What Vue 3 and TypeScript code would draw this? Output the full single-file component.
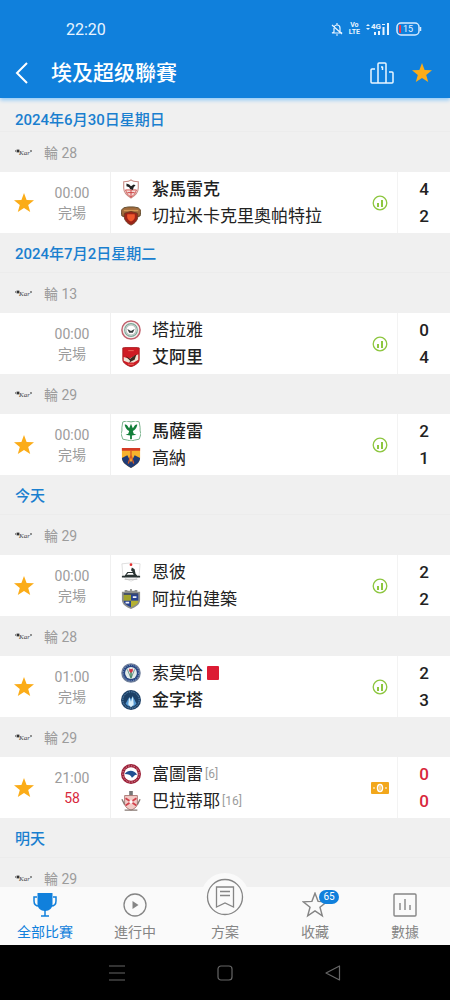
<script setup lang="ts">
import { computed, ref } from 'vue'

interface Team {
  name: string
  crest: string
  score: number
  winner?: boolean
  redCard?: boolean
  rank?: number
}
interface Match {
  time: string
  status: string
  live?: boolean
  starred: boolean
  teams: Team[]
}
interface Fixture {
  id: number
  round: number
  match?: Match
}
interface Day {
  label: string
  pinned?: boolean
  fixtures: Fixture[]
}

const days = ref<Day[]>([
  {
    label: '2024年6月30日星期日',
    pinned: true,
    fixtures: [
      {
        id: 1, round: 28,
        match: {
          time: '00:00', status: '完場', starred: true,
          teams: [
            { name: '紮馬雷克', crest: 'zamalek', score: 4, winner: true },
            { name: '切拉米卡克里奧帕特拉', crest: 'ceramica', score: 2 },
          ],
        },
      },
    ],
  },
  {
    label: '2024年7月2日星期二',
    fixtures: [
      {
        id: 2, round: 13,
        match: {
          time: '00:00', status: '完場', starred: false,
          teams: [
            { name: '塔拉雅', crest: 'tala', score: 0 },
            { name: '艾阿里', crest: 'ahly', score: 4, winner: true },
          ],
        },
      },
      {
        id: 3, round: 29,
        match: {
          time: '00:00', status: '完場', starred: true,
          teams: [
            { name: '馬薩雷', crest: 'masry', score: 2, winner: true },
            { name: '高納', crest: 'gouna', score: 1 },
          ],
        },
      },
    ],
  },
  {
    label: '今天',
    fixtures: [
      {
        id: 4, round: 29,
        match: {
          time: '00:00', status: '完場', starred: true,
          teams: [
            { name: '恩彼', crest: 'enppi', score: 2 },
            { name: '阿拉伯建築', crest: 'mokawloon', score: 2 },
          ],
        },
      },
      {
        id: 5, round: 28,
        match: {
          time: '01:00', status: '完場', starred: true,
          teams: [
            { name: '索莫哈', crest: 'smouha', score: 2, redCard: true },
            { name: '金字塔', crest: 'pyramids', score: 3, winner: true },
          ],
        },
      },
      {
        id: 6, round: 29,
        match: {
          time: '21:00', status: '58', live: true, starred: true,
          teams: [
            { name: '富圖雷', crest: 'future', score: 0, rank: 6 },
            { name: '巴拉蒂耶', crest: 'baladiyat', score: 0, rank: 16 },
          ],
        },
      },
    ],
  },
  {
    label: '明天',
    fixtures: [{ id: 7, round: 29 }],
  },
])

const leagueStarred = ref(true)
const activeTab = ref('all')
const favourites = ref(65)
const tabs = computed(() => [
  { id: 'all', label: '全部比賽' },
  { id: 'live', label: '進行中' },
  { id: 'plan', label: '方案' },
  { id: 'fav', label: '收藏', badge: favourites.value },
  { id: 'data', label: '數據' },
])

function toggle(match: Match) {
  match.starred = !match.starred
  favourites.value += match.starred ? 1 : -1
}
</script>

<template>
  <div class="app">
    <svg class="defs" aria-hidden="true">
      <symbol id="star" viewBox="0 0 22 22">
        <path d="M11 1l2.6 6.9 7.4.4-5.8 4.6 2 7.2L11 16l-6.2 4.1 2-7.2L1 8.3l7.4-.4z" />
      </symbol>
      <symbol id="zamalek" viewBox="0 0 22 22">
        <path d="M11 1c2 2 5 2 8 2v7c0 5-3 8-8 11-5-3-8-6-8-11V3c3 0 6 0 8-2z" fill="#fff" stroke="#c98b84" stroke-width="1.200" />
        <path d="M5 12h12c-1 4-3 6-6 8-3-2-5-4-6-8z" fill="#f4dcd9" stroke="#d04a48" />
        <path d="M11 12v8M7 15h8" stroke="#cc3b3b" />
        <path d="M6 5l3 1 2 2 3-2 2 1-2 2-1 3-3-1-1-2-3-1z" fill="#222" />
      </symbol>
      <symbol id="ceramica" viewBox="0 0 22 22">
        <path d="M0 5l3-3 5-1h6l5 1 3 3-1 6-4 1-6-2-6 2-4-1z" fill="#a06a3c" stroke="#5c482a" />
        <path d="M3 5h16" stroke="#d39a55" stroke-width="1.500" />
        <path d="M4 8l7-2 7 2c2 6-2 11-7 13C6 19 2 14 4 8z" fill="#9c2418" stroke="#6c3a20" />
        <path d="M7 9h8c1 4-1 7-4 8-3-1-5-4-4-8z" fill="#ef572c" />
      </symbol>
      <symbol id="tala" viewBox="0 0 22 22">
        <circle cx="11" cy="11" r="10" fill="#f4eded" stroke="#c0606c" stroke-width="1.600" />
        <circle cx="11" cy="11" r="7" fill="#fff" stroke="#79a796" stroke-width="1.200" />
        <circle cx="11" cy="11" r="5.500" fill="none" stroke="#777" stroke-width=".6" />
        <path d="M7 10l2 1 2 1 2-1 2-1-2 4H9z" fill="#343b3b" />
      </symbol>
      <symbol id="ahly" viewBox="0 0 22 22">
        <path d="M2 1c6-1 12-1 18 0v13c0 4-5 6-9 8-4-2-9-4-9-8z" fill="#cf1b24" stroke="#a51c20" />
        <path d="M3 11l6 2 10-5v6l-5 3H8l-5-2z" fill="#eee3d6" />
        <path d="M5 10l5 3 7-5-2 6-4 2-2 2 1-3z" fill="#39281d" />
        <path d="M8 4h6M8 19h6" stroke="#ee6d60" />
      </symbol>
      <symbol id="masry" viewBox="0 0 22 22">
        <path d="M2 1l4-1 5 1 5-1 4 1 1 6v4l1 3-2 6-5 1-4 1-4-1-5-1-2-6 1-3V7z" fill="#fff" stroke="#6cab80" stroke-width="1" />
        <path d="M4 4c3-1 3 2 5 4l2-5 2 5c2-2 2-5 5-4-1 4-3 6-5 7l1 3 3 1-5 1v4h-2v-4l-5-1 3-1 1-3C7 10 5 8 4 4z" fill="#137f3a" />
      </symbol>
      <symbol id="gouna" viewBox="0 0 22 22">
        <path d="M1 0h20v11c0 5-5 8-10 11C6 19 1 16 1 11z" fill="#f7b22d" />
        <path d="M1 0h20v3H1z" fill="#d43b25" />
        <path d="M1 11l6-3 4 8 4-8 6 3c0 5-5 8-10 11C6 19 1 16 1 11z" fill="#203b75" />
        <path d="M11 3v8M8 17l3-9 3 9" stroke="#d65a25" stroke-width="1.500" fill="none" />
      </symbol>
      <symbol id="enppi" viewBox="0 0 22 22">
        <path d="M1 2l10-1 10 1-1 12c-1 4-6 6-9 7-3-1-8-3-9-7z" fill="#fff" stroke="#ddd" />
        <circle cx="11" cy="3" r="1.500" fill="#e32e2d" />
        <path d="M1 15h3l3-4h6l-2-2 1-3 3 2 1 5 2 2h3v2H1z" fill="#293332" />
        <path d="M8 12h5l1 2H6z" fill="#fff" />
        <path d="M4 19h14" stroke="#b6b6b6" />
      </symbol>
      <symbol id="mokawloon" viewBox="0 0 22 22">
        <path d="M1 3h3V1h3v1h3V0h2v2h3V1h3v2h3v9c0 5-5 8-10 10C6 20 1 17 1 12z" fill="#8d8f8c" />
        <path d="M3 6h8v7H3z" fill="#a2a32a" />
        <path d="M11 6h8v7h-8zM3 13h8v7c-5-2-8-4-8-7z" fill="#27428f" />
        <path d="M11 13h8c0 3-3 5-8 7z" fill="#b4b132" />
        <path d="M13 9h4M5 15h4" stroke="#eef0fa" stroke-width="2" />
        <path d="M3 5.500h16" stroke="#263765" stroke-width="1.500" />
      </symbol>
      <symbol id="smouha" viewBox="0 0 22 22">
        <circle cx="11" cy="11" r="10" fill="#274682" stroke="#71809b" stroke-width="1.500" />
        <circle cx="11" cy="11" r="8.500" fill="none" stroke="#9eb1d6" stroke-dasharray="1 1.500" />
        <circle cx="11" cy="11" r="6.500" fill="#e4ece9" />
        <path d="M7 7l4 10 4-10" stroke="#5c8a86" fill="none" />
        <path d="M11 9v7" stroke="#347b51" stroke-width="1.500" />
        <path d="M9 6l2 1 2-1v3l-2 2-2-2z" fill="#d13547" />
      </symbol>
      <symbol id="pyramids" viewBox="0 0 22 22">
        <circle cx="11" cy="11" r="11" fill="#1d4167" />
        <circle cx="11" cy="11" r="9" fill="none" stroke="#75a5cd" stroke-dasharray="1 1" />
        <path d="M5 15l4-7 2 2 2-3 4 8-3 3H8z" fill="#5599d2" />
        <path d="M9 8l2 5 2-6 1 9-3 3-3-3z" fill="#d9eef9" />
      </symbol>
      <symbol id="future" viewBox="0 0 22 22">
        <circle cx="11" cy="11" r="11" fill="#9b2038" />
        <circle cx="11" cy="11" r="9" fill="none" stroke="#e4a6ae" stroke-dasharray="1.500 1.500" />
        <circle cx="11" cy="11" r="7.500" fill="#fff" />
        <path d="M4 11c4-5 10-5 14 1-3-1-4 2-6 3-1-3-4-4-8-4z" fill="#214f91" />
      </symbol>
      <symbol id="baladiyat" viewBox="0 0 22 22">
        <path d="M9 0h4v6H9z" fill="#777" />
        <path d="M4 5h14v10c-1 3-4 5-7 6-3-1-6-3-7-6z" fill="#f2cdc8" stroke="#a87572" />
        <path d="M5 8l12 8M17 8L5 16" stroke="#d2424c" stroke-width="2" />
        <path d="M1 9l3 6M21 9l-3 6M4 21h14" stroke="#867872" stroke-width="1.500" />
        <circle cx="11" cy="12" r="2" fill="#fff" />
      </symbol>
    </svg>

    <header class="top">
      <div class="status">
        <time>22:20</time>
        <div class="indicators">
          <svg width="12" height="14" viewBox="0 0 12 14" fill="none" stroke="#e8f4ff" stroke-width="1.200">
            <path d="M3 10V6a3 3 0 016 0v4l2 1H1zM6 1v2M5 13h2M1 3l10 9" />
          </svg>
          <span class="volte"><b>Vo</b><b>LTE</b></span>
          <svg width="24" height="14" viewBox="0 0 24 14" fill="#e8f4ff">
            <path d="M0 4l2-2 2 2zM0 6l2 2 2-2zM8 10h2v3H8zM12 9h2v4h-2zM16.500 5h2v8h-2zM21 1h2v12h-2z" />
            <text x="5" y="7" font-size="8" font-weight="700" font-family="Roboto">4G</text>
            <path d="M16 2h3v1h-3z" />
          </svg>
          <svg width="26" height="14" viewBox="0 0 26 14">
            <rect x="1" y="1" width="22" height="12" rx="4" fill="none" stroke="#d5eaff" stroke-width="1.500" />
            <path d="M3 4q0-1 1-1h1v8H4q-1 0-1-1z" fill="#ee3346" />
            <path d="M24.500 5v4" stroke="#d5eaff" stroke-width="1.500" />
            <text x="12" y="10" font-size="9" text-anchor="middle" font-family="Roboto" fill="#e8f4ff">15</text>
          </svg>
        </div>
      </div>
      <div class="titlebar">
        <button class="icon-btn" aria-label="返回">
          <svg width="14" height="22" viewBox="0 0 14 22" fill="none" stroke="#fff" stroke-width="2"><path d="M12 1L2 11l10 10" /></svg>
        </button>
        <h1>埃及超级聯賽</h1>
        <button class="icon-btn" aria-label="排名">
          <svg width="24" height="22" viewBox="0 0 24 22" fill="none" stroke="#eaf6ff" stroke-width="1.500" stroke-linejoin="round">
            <path d="M8 21V2q0-1 1-1h6q1 0 1 1v19M5 7H2q-1 0-1 1v12q0 1 1 1h20q1 0 1-1v-9q0-1-1-1h-3M11 5h1.500v3" />
          </svg>
        </button>
        <button class="icon-btn star" :class="{ off: !leagueStarred }" aria-label="收藏聯賽" :aria-pressed="leagueStarred" @click="leagueStarred = !leagueStarred">
          <svg width="22" height="22"><use href="#star" /></svg>
        </button>
      </div>
    </header>

    <main class="list">
      <section v-for="day in days" :key="day.label">
        <h2 class="day" :class="{ pinned: day.pinned }">{{ day.label }}</h2>
        <template v-for="f in day.fixtures" :key="f.id">
          <h3 class="round">
            <svg width="18" height="10" viewBox="0 0 18 10" aria-hidden="true">
              <circle cx="3" cy="4" r="2" fill="#999" />
              <path d="M0 4h1M2 3l2 2M2 5l2-2M15 4h2" stroke="#333" stroke-width="1" />
              <text x="4" y="8" font-size="7" font-style="italic" font-family="Liberation Serif" fill="#444">Kar</text>
            </svg>
            <span>輪 {{ f.round }}</span>
          </h3>
          <article v-if="f.match" class="match" :class="{ live: f.match.live }">
            <div class="info">
              <button class="star" :class="{ off: !f.match.starred }" aria-label="收藏比賽" :aria-pressed="f.match.starred" @click="toggle(f.match)">
                <svg width="22" height="22"><use href="#star" /></svg>
              </button>
              <div class="when">
                <time>{{ f.match.time }}</time>
                <span>{{ f.match.status }}</span>
              </div>
            </div>
            <div class="teams">
              <div v-for="t in f.match.teams" :key="t.name" class="team" :class="{ winner: t.winner }">
                <svg width="20" height="20" aria-hidden="true"><use :href="'#' + t.crest" /></svg>
                <span>{{ t.name }}</span>
                <i v-if="t.redCard" class="card" role="img" aria-label="紅牌"></i>
                <small v-if="t.rank">[{{ t.rank }}]</small>
              </div>
            </div>
            <div class="extra">
              <svg v-if="f.match.live" width="18" height="12" viewBox="0 0 18 12">
                <rect width="18" height="12" rx="1" fill="#f2a71c" />
                <ellipse cx="9" cy="6" rx="2.500" ry="3.500" fill="#f2a71c" stroke="#fff" stroke-width="1.500" />
                <path d="M2 6h2M14 6h2M9 4v4" stroke="#fff" stroke-width="1" />
              </svg>
              <svg v-else width="16" height="16" viewBox="0 0 16 16">
                <circle cx="8" cy="8" r="6.800" fill="none" stroke="#8dc63f" stroke-width="1.300" />
                <path d="M5 8h2v4H5zM9 5h2v7H9z" fill="#8dc63f" />
              </svg>
            </div>
            <div class="scores">
              <span v-for="t in f.match.teams" :key="t.name">{{ t.score }}</span>
            </div>
          </article>
        </template>
      </section>
    </main>

    <nav class="tabs">
      <button v-for="tab in tabs" :key="tab.id" class="tab" :class="{ active: activeTab === tab.id, plan: tab.id === 'plan' }" @click="activeTab = tab.id">
        <span class="glyph">
          <svg v-if="tab.id === 'all'" width="24" height="24" viewBox="0 0 24 24">
            <path d="M4.500 0h15v11c0 4-3 7-7.500 7s-7.500-3-7.500-7z" fill="currentColor" />
            <path d="M4 4H1v4c0 3 2 5 5 5M20 4h3v4c0 3-2 5-5 5M12 17v6M8 23h8" fill="none" stroke="currentColor" stroke-width="1.500" />
          </svg>
          <svg v-else-if="tab.id === 'live'" width="24" height="24" viewBox="0 0 24 24">
            <circle cx="12" cy="12" r="11" fill="none" stroke="currentColor" stroke-width="1.300" />
            <path d="M9.500 8l6 4-6 4z" fill="currentColor" />
          </svg>
          <svg v-else-if="tab.id === 'plan'" width="38" height="38" viewBox="0 0 38 38" fill="none" stroke="currentColor" stroke-width="1.300">
            <circle cx="19" cy="19" r="17.500" />
            <path d="M10.500 9h17v20l-8.500-4-8.500 4zM14 13.500h10M14 17.500h10" />
          </svg>
          <svg v-else-if="tab.id === 'fav'" width="26" height="26" fill="none" stroke="currentColor" stroke-width="1.200"><use href="#star" /></svg>
          <svg v-else width="24" height="24" viewBox="0 0 24 24" fill="none" stroke="currentColor" stroke-width="1.400">
            <rect x="1" y="1" width="22" height="22" rx="1" />
            <path d="M7 10v7M12 6v11M17 12v5" />
          </svg>
          <span v-if="tab.badge" class="badge">{{ tab.badge }}</span>
        </span>
        <span class="label">{{ tab.label }}</span>
      </button>
    </nav>

    <footer class="system">
      <button aria-label="最近">
        <svg width="16" height="16" viewBox="0 0 16 16" stroke="#666" stroke-width="1.200"><path d="M0 1h16M0 8h16M0 15h16" /></svg>
      </button>
      <button aria-label="主頁">
        <svg width="16" height="16" viewBox="0 0 16 16" fill="none" stroke="#666" stroke-width="1.200"><rect x="1" y="1" width="14" height="14" rx="3" /></svg>
      </button>
      <button aria-label="返回上頁">
        <svg width="16" height="16" viewBox="0 0 16 16" fill="none" stroke="#666" stroke-width="1.200" stroke-linejoin="round"><path d="M14.500 1v14L1 8z" /></svg>
      </button>
    </footer>
  </div>
</template>

<style>
body {
  background: #f0f0f0;
}
</style>

<style scoped>
.app {
  display: flex;
  flex-direction: column;
  height: 100vh;
  overflow: hidden;
  background: #f0f0f0;
  color: #222;
  font-family: Roboto, 'Noto Sans CJK SC', sans-serif;
}
.defs {
  position: absolute;
  width: 0;
  height: 0;
}
svg {
  display: block;
  flex: none;
}
button {
  display: flex;
  align-items: center;
  justify-content: center;
  margin: 0;
  padding: 0;
  border: 0;
  background: none;
  font: inherit;
  color: inherit;
}
h1, h2, h3 {
  margin: 0;
}
.top {
  flex: none;
  z-index: 1;
  background: #1080dc;
  color: #fff;
  box-shadow: 0 2px 4px #8cc8f8;
}
.status {
  display: flex;
  justify-content: space-between;
  align-items: center;
  height: 20px;
  padding: 19px 28px 9px 66px;
  font-size: 16px;
  color: #e8f4ff;
}
.indicators {
  display: flex;
  align-items: center;
  gap: 6px;
}
.volte {
  display: flex;
  flex-direction: column;
  align-items: center;
  font-size: 7px;
  line-height: 7px;
}
.titlebar {
  display: flex;
  align-items: center;
  height: 50px;
  padding-right: 8px;
}
.titlebar h1 {
  flex: 1;
  padding-left: 7px;
  font-size: 21px;
  line-height: 30px;
  font-weight: 500;
}
.icon-btn {
  width: 40px;
  height: 40px;
}
.titlebar .icon-btn:first-child {
  width: 44px;
}
.star {
  color: #fbac18;
  fill: currentColor;
}
.star.off {
  visibility: hidden;
}
.top .star.off {
  visibility: visible;
  color: #a8d3fa;
}
.list {
  flex: 1;
  min-height: 0;
  overflow-y: auto;
  scrollbar-width: none;
}
.day {
  box-sizing: border-box;
  height: 40px;
  padding: 0 15px;
  border-bottom: 1px solid #ececec;
  font-size: 15px;
  line-height: 42px;
  font-weight: 500;
  color: #1a7fcf;
}
.day.pinned {
  height: 34px;
  line-height: 44px;
}
.round {
  display: flex;
  align-items: center;
  gap: 11px;
  height: 40px;
  padding: 0 15px;
  font-size: 14px;
  font-weight: 400;
  color: #9c9c9c;
}
.match {
  display: flex;
  height: 61px;
  background: #fff;
}
.info {
  display: flex;
  align-items: center;
  box-sizing: border-box;
  width: 111px;
  border-right: 1px solid #f0f0f0;
}
.info .star {
  width: 48px;
  height: 48px;
}
.when {
  display: flex;
  flex-direction: column;
  align-items: center;
  width: 48px;
  font-size: 14px;
  line-height: 20px;
  color: #9c9c9c;
}
.live .when span {
  color: #d8283c;
}
.teams {
  display: flex;
  flex: 1;
  flex-direction: column;
  justify-content: center;
  min-width: 0;
  padding-left: 10px;
}
.team {
  display: flex;
  align-items: center;
  height: 27px;
  font-size: 17px;
  line-height: 27px;
  white-space: nowrap;
}
.team > span {
  margin-left: 11px;
}
.winner {
  font-weight: 500;
}
.card {
  width: 12px;
  height: 14px;
  margin-left: 4px;
  border-radius: 1px;
  background: #dc1c34;
}
small {
  margin-left: 2px;
  font-size: 12px;
  color: #9c9c9c;
}
.extra {
  display: flex;
  align-items: center;
  justify-content: center;
  width: 34px;
}
.scores {
  display: flex;
  flex-direction: column;
  justify-content: center;
  width: 52px;
  border-left: 1px solid #f3f3f3;
  text-align: center;
  font-size: 17px;
  line-height: 27px;
  font-weight: 500;
}
.live .scores {
  color: #d8283c;
}
.tabs {
  display: flex;
  flex: none;
  height: 58px;
  z-index: 1;
  background: #fafafa;
  color: #858585;
}
.tab {
  flex: 1;
  flex-direction: column;
  justify-content: flex-end;
  padding-bottom: 2px;
}
.tab.active {
  color: #1080dc;
}
.glyph {
  position: relative;
  display: flex;
  flex: none;
  align-items: center;
  justify-content: center;
  height: 32px;
}
.plan .glyph {
  width: 48px;
  height: 48px;
  border-radius: 50%;
  background: #fafafa;
}
.label {
  font-size: 14px;
  line-height: 22px;
}
.badge {
  position: absolute;
  left: 17px;
  top: 1px;
  width: 20px;
  border-radius: 7px;
  background: #1080dc;
  color: #fff;
  font-size: 10px;
  line-height: 14px;
  text-align: center;
}
.system {
  display: flex;
  flex: none;
  justify-content: center;
  height: 55px;
  background: #000;
}
.system button {
  width: 24%;
}
</style>
